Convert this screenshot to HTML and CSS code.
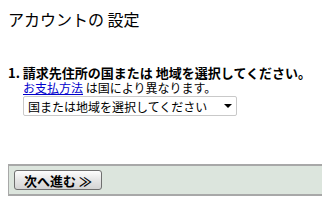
FILE: index.html
```html
<!DOCTYPE html>
<html lang="ja">
<head>
  <meta charset="UTF-8">
  <title>アカウントの 設定</title>
  <link rel="stylesheet" href="styles.css">
</head>
<body>
  <h1 class="title">アカウントの 設定</h1>

  <div class="step">
    <div class="step-head">1. 請求先住所の国または 地域を選択してください。</div>
    <div class="step-body">
      <div class="note"><a href="#">お支払方法</a> は国により異なります。</div>
      <span class="select-wrap">
        <select id="country">
          <option>国または地域を選択してください</option>
        </select>
      </span>
    </div>
  </div>

  <div class="footer">
    <button class="next-btn">次へ進む ≫</button>
  </div>
</body>
</html>
```

FILE: styles.css
```css
body {
  margin: 0;
  background: #fff;
  color: #000;
  font-family: "Noto Sans CJK JP", "DejaVu Sans", sans-serif;
  font-size: 12px;
}

.title {
  margin: 9px 8px 0;
  font-size: 16px;
  font-weight: normal;
  line-height: 20px;
}

.step {
  margin-top: 36px;
  padding-left: 8px;
}

.step-head {
  font-size: 13px;
  font-weight: bold;
  line-height: 15px;
}

.step-body {
  padding-left: 15px;
}

.note {
  line-height: 15px;
}

.note a {
  color: #0000cc;
}

.select-wrap {
  position: relative;
  display: inline-block;
  margin-top: 1px;
}

.select-wrap select {
  appearance: none;
  -webkit-appearance: none;
  width: 214px;
  height: 20px;
  padding: 0 4px;
  border: 1px solid #c9c9c9;
  border-radius: 2px;
  background: #fff;
  font-family: inherit;
  font-size: 12px;
  color: #000;
}

.select-wrap::after {
  content: "";
  position: absolute;
  right: 5px;
  top: 8px;
  border-left: 4px solid transparent;
  border-right: 4px solid transparent;
  border-top: 4px solid #000;
  pointer-events: none;
}

.footer {
  margin: 48px 0 0 8px;
  padding: 4px 5px;
  background: #dce5dd;
  border-top: 2px solid #a8a8a8;
  border-bottom: 2px solid #a8a8a8;
  border-left: 1px solid #a8a8a8;
}

.next-btn {
  width: 88px;
  height: 20px;
  padding: 0;
  border: 1px solid #6f6f6f;
  border-radius: 3px;
  background: linear-gradient(#fdfdfd, #e6e6e6 50%, #d4d4d4);
  font-family: inherit;
  font-size: 13px;
  font-weight: bold;
  color: #000;
  cursor: pointer;
}
```
